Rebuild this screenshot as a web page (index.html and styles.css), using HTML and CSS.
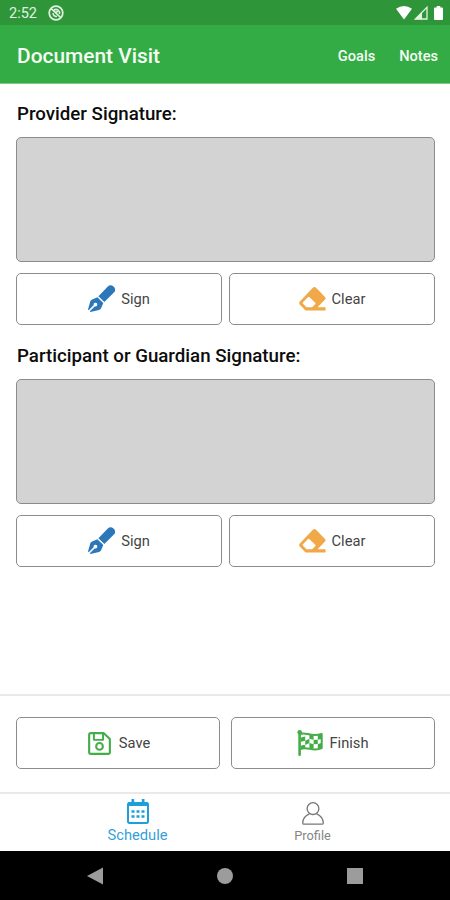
FILE: index.html
```html
<!DOCTYPE html>
<html lang="en">
<head>
    <meta charset="UTF-8">
    <title>Document Visit</title>
    <link rel="stylesheet" href="styles.css">
</head>
<body>
<!-- shared icons -->
<svg class="defs">
    <symbol id="pen" viewBox="0 0 27 27">
        <path fill="#2c77b9" d="M10.4 11.2 19.6 1.7Q22.4-1.1 25.5 1.4Q28.7 4.4 26.1 7.2L16.4 17Z"/>
        <path fill="#2c77b9" fill-rule="evenodd" d="M9.4 12.3 15.3 18.1 13.2 23Q12.6 24.4 11 24.9L2.5 26.9 1.8 26.2 6.9 21.2A1.8 1.8 0 1 0 5.8 20.1L.7 25.2 0 24.4 2.4 16.1Q2.8 14.9 4.1 14.4Z"/>
    </symbol>
    <symbol id="eraser" viewBox="0 0 27 24">
        <path fill="#f0a848" fill-rule="evenodd" d="M14.1.6Q15.4-.5 16.8.6L26 9.9Q27.2 11.2 26 12.6L18.6 20.2H26Q26.6 20.2 26.6 21V22.8Q26.6 23.6 26 23.6H7.9Q6.7 23.6 5.8 22.7L.7 17.4Q-.4 16 .8 14.5ZM8.8 10.2 4 15.2Q3.4 16 4.1 16.8L7.5 20.2H13.1L16.2 17.2Q16.8 16.5 16.2 15.8L10.6 10.2Q9.7 9.4 8.8 10.2Z"/>
    </symbol>
</svg>

<div class="status">
    <span class="time">2:52</span>
    <svg class="blocked" width="16" height="16" viewBox="0 0 16 16" fill="none" stroke="#e1f1e2">
        <circle cx="8" cy="8" r="6.8" stroke-width="1.7"/>
        <path stroke-width="1.5" d="M3.2 3.6 12.8 12.6M5 8A3.3 3.3 0 0 0 9 11.3M6 5A3.6 3.6 0 0 1 11.4 9M7.5 7 10 6.5"/>
    </svg>
    <div class="signals">
        <svg width="16" height="14" viewBox="0 0 16 14"><path fill="#fff" d="M0 2.8Q8-2.7 16 2.8L8 13.5Z"/></svg>
        <svg width="14" height="14" viewBox="0 0 14 14"><path fill="none" stroke="#e2f3e3" stroke-width="1.3" d="M1.3 13H13V1.3Z"/><path fill="#e2f3e3" d="M1 13.3H8V6.2Z"/></svg>
        <svg width="9" height="14" viewBox="0 0 9 14"><path fill="#fff" d="M2.7 0H6.3V1.4H8Q9 1.4 9 2.4V13Q9 14 8 14H1Q0 14 0 13V2.4Q0 1.4 1 1.4H2.7Z"/></svg>
    </div>
</div>

<div class="header">
    <h1>Document Visit</h1>
    <a class="goals">Goals</a>
    <a class="notes">Notes</a>
</div>

<div class="main">
    <h2>Provider Signature:</h2>
    <div class="pad"></div>
    <div class="buttons">
        <button class="btn"><svg class="pen"><use href="#pen"/></svg><span>Sign</span></button>
        <button class="btn"><svg class="eraser"><use href="#eraser"/></svg><span>Clear</span></button>
    </div>
    <h2>Participant or Guardian Signature:</h2>
    <div class="pad"></div>
    <div class="buttons">
        <button class="btn"><svg class="pen"><use href="#pen"/></svg><span>Sign</span></button>
        <button class="btn"><svg class="eraser"><use href="#eraser"/></svg><span>Clear</span></button>
    </div>
</div>

<div class="actions">
    <button class="btn save">
        <svg width="23" height="23" viewBox="0 0 24 24" fill="none" stroke="#43ad47" stroke-width="2.2" stroke-linejoin="round">
            <path d="M3 1.2H16.5L22.8 7.2V21Q22.8 22.8 21 22.8H3Q1.2 22.8 1.2 21V3Q1.2 1.2 3 1.2Z"/>
            <path stroke-width="2" d="M6.2 1.5V8.2H15.7V1.5"/>
            <circle cx="12" cy="15" r="3.5"/>
        </svg>
        <span>Save</span>
    </button>
    <button class="btn finish">
        <svg width="26" height="26" viewBox="0 0 26 26">
            <circle cx="2.7" cy="2.3" r="2.3" fill="#43ad47"/>
            <path fill="none" stroke="#43ad47" stroke-width="2.6" stroke-linecap="round" d="M2.6 2.5V24.7"/>
            <path fill="none" stroke="#43ad47" stroke-width="2" stroke-linejoin="round" d="M3 4C9 1.5 13 7.3 24.7 4V18.2C15 22.5 11 15.5 3 19.2"/>
            <path fill="#43ad47" d="M4 7.5 8.2 6.6V10.8L4 11.7ZM12.4 4.7 16.6 5.7V9.8L12.4 8.8ZM20.8 5.2 24.5 4.5V9L20.8 9.8ZM8.2 10.8 12.4 8.8V13L8.2 15ZM16.6 9.8H20.8V14L16.6 14.3ZM4 15.5 8.2 14.7V18L4 18.8ZM12.4 13 16.6 14.3V18.7L12.4 17.7ZM20.8 14 24.5 13V18L20.8 19Z"/>
        </svg>
        <span>Finish</span>
    </button>
</div>

<div class="tabs">
    <a class="tab active">
        <svg width="22" height="25" viewBox="0 0 22 25">
            <path fill="none" stroke="#1c9fda" stroke-width="2" d="M2.5 4H19.5Q21 4 21 5.5V22.3Q21 24 19.5 24H2.5Q1 24 1 22.3V5.5Q1 4 2.5 4Z"/>
            <path fill="#1c9fda" d="M1 3.2H21V7H1ZM4.5 0H7.2V4H4.5ZM14.8 0H17.5V4H14.8Z"/>
            <path fill="none" stroke="#1c9fda" stroke-width="2.7" stroke-dasharray="3 2" d="M4.5 12.5H17.5M4.5 17.5H17.5"/>
        </svg>
        <span>Schedule</span>
    </a>
    <a class="tab">
        <svg width="22" height="23" viewBox="0 0 22 23" fill="none" stroke="#777" stroke-width="1.3">
            <circle cx="11" cy="6.6" r="5.9"/>
            <path stroke-linejoin="round" d="M7.4 11.9Q.9 14.6.7 21Q.7 22.2 1.9 22.2H20.1Q21.3 22.2 21.3 21Q21.1 14.6 14.6 11.9"/>
        </svg>
        <span>Profile</span>
    </a>
</div>

<div class="navbar">
    <svg width="16" height="18" viewBox="0 0 16 18"><path fill="#9c9c9c" d="M16 .5V17.5L0 9Z"/></svg>
    <i class="home"></i>
    <i class="recent"></i>
</div>
</body>
</html>
```
FILE: styles.css
```css
* {
    margin: 0;
    padding: 0;
    box-sizing: border-box;
}

body {
    display: flex;
    flex-direction: column;
    width: 450px;
    height: 900px;
    overflow: hidden;
    background: #fff;
    font-family: Roboto, "Liberation Sans", sans-serif;
}

svg {
    display: block;
    flex: none;
}

.defs {
    display: none;
}

.status {
    display: flex;
    align-items: center;
    height: 25px;
    padding: 1px 7px 0 9px;
    background: #2e9639;
}

.time {
    width: 39px;
    color: #e1f1e2;
    font-size: 14.5px;
}

.signals {
    display: flex;
    margin-left: auto;
}

.signals svg:nth-child(2) {
    margin: 0 6px 0 2px;
}

.header {
    display: flex;
    align-items: center;
    height: 59px;
    padding: 3px 12px 0 17px;
    border-bottom: 1px solid #80ca88;
    background: #34ac45;
    color: #f4fcf4;
}

h1 {
    margin-right: auto;
    font-size: 20.9px;
    font-weight: 500;
}

.header a {
    font-size: 14.6px;
    font-weight: 500;
}

.goals {
    margin-right: 24px;
}

.main {
    flex: 1;
    padding: 14px 15px 0 16px;
}

h2 {
    height: 39px;
    padding-left: 1px;
    line-height: 32px;
    color: #0c0c0c;
    font-size: 18.7px;
    font-weight: 500;
}

.pad {
    height: 125px;
    border: 1px solid #8c8c8c;
    border-radius: 5px;
    background: #d3d3d3;
}

.buttons {
    display: flex;
    gap: 7px;
    margin: 11px 0 15px;
}

.btn {
    display: flex;
    flex: 1;
    align-items: center;
    justify-content: center;
    gap: 6px;
    height: 52px;
    border: 1px solid #8c8c8c;
    border-radius: 5px;
    background: #fff;
    color: #444;
    font-family: inherit;
    font-size: 14.7px;
}

.pen {
    width: 27px;
    height: 27px;
    margin-bottom: 2px;
}

.eraser {
    width: 27px;
    height: 24px;
}

.actions {
    display: grid;
    grid-template-columns: 1fr 1fr;
    gap: 11px;
    height: 98px;
    padding: 21px 15px 0 16px;
    border-top: 2px solid #e9e9e9;
}

.save {
    gap: 8px;
    padding-left: 2px;
}

.tabs {
    display: flex;
    justify-content: center;
    height: 59px;
    padding-top: 5px;
    border-top: 2px solid #e9e9e9;
}

.tab {
    display: flex;
    flex-direction: column;
    align-items: center;
    width: 175px;
    color: #858585;
    font-size: 12.8px;
}

.tab svg {
    margin: 3px 0 3px;
}

.active {
    color: #369fd8;
    font-size: 14.7px;
}

.active svg {
    margin: 0 0 2px;
}

.navbar {
    display: flex;
    align-items: center;
    justify-content: center;
    gap: 114px;
    height: 49px;
    background: #000;
}

.home {
    width: 16px;
    height: 16px;
    border-radius: 50%;
    background: #9c9c9c;
}

.recent {
    width: 16px;
    height: 16px;
    background: #9c9c9c;
}
```
